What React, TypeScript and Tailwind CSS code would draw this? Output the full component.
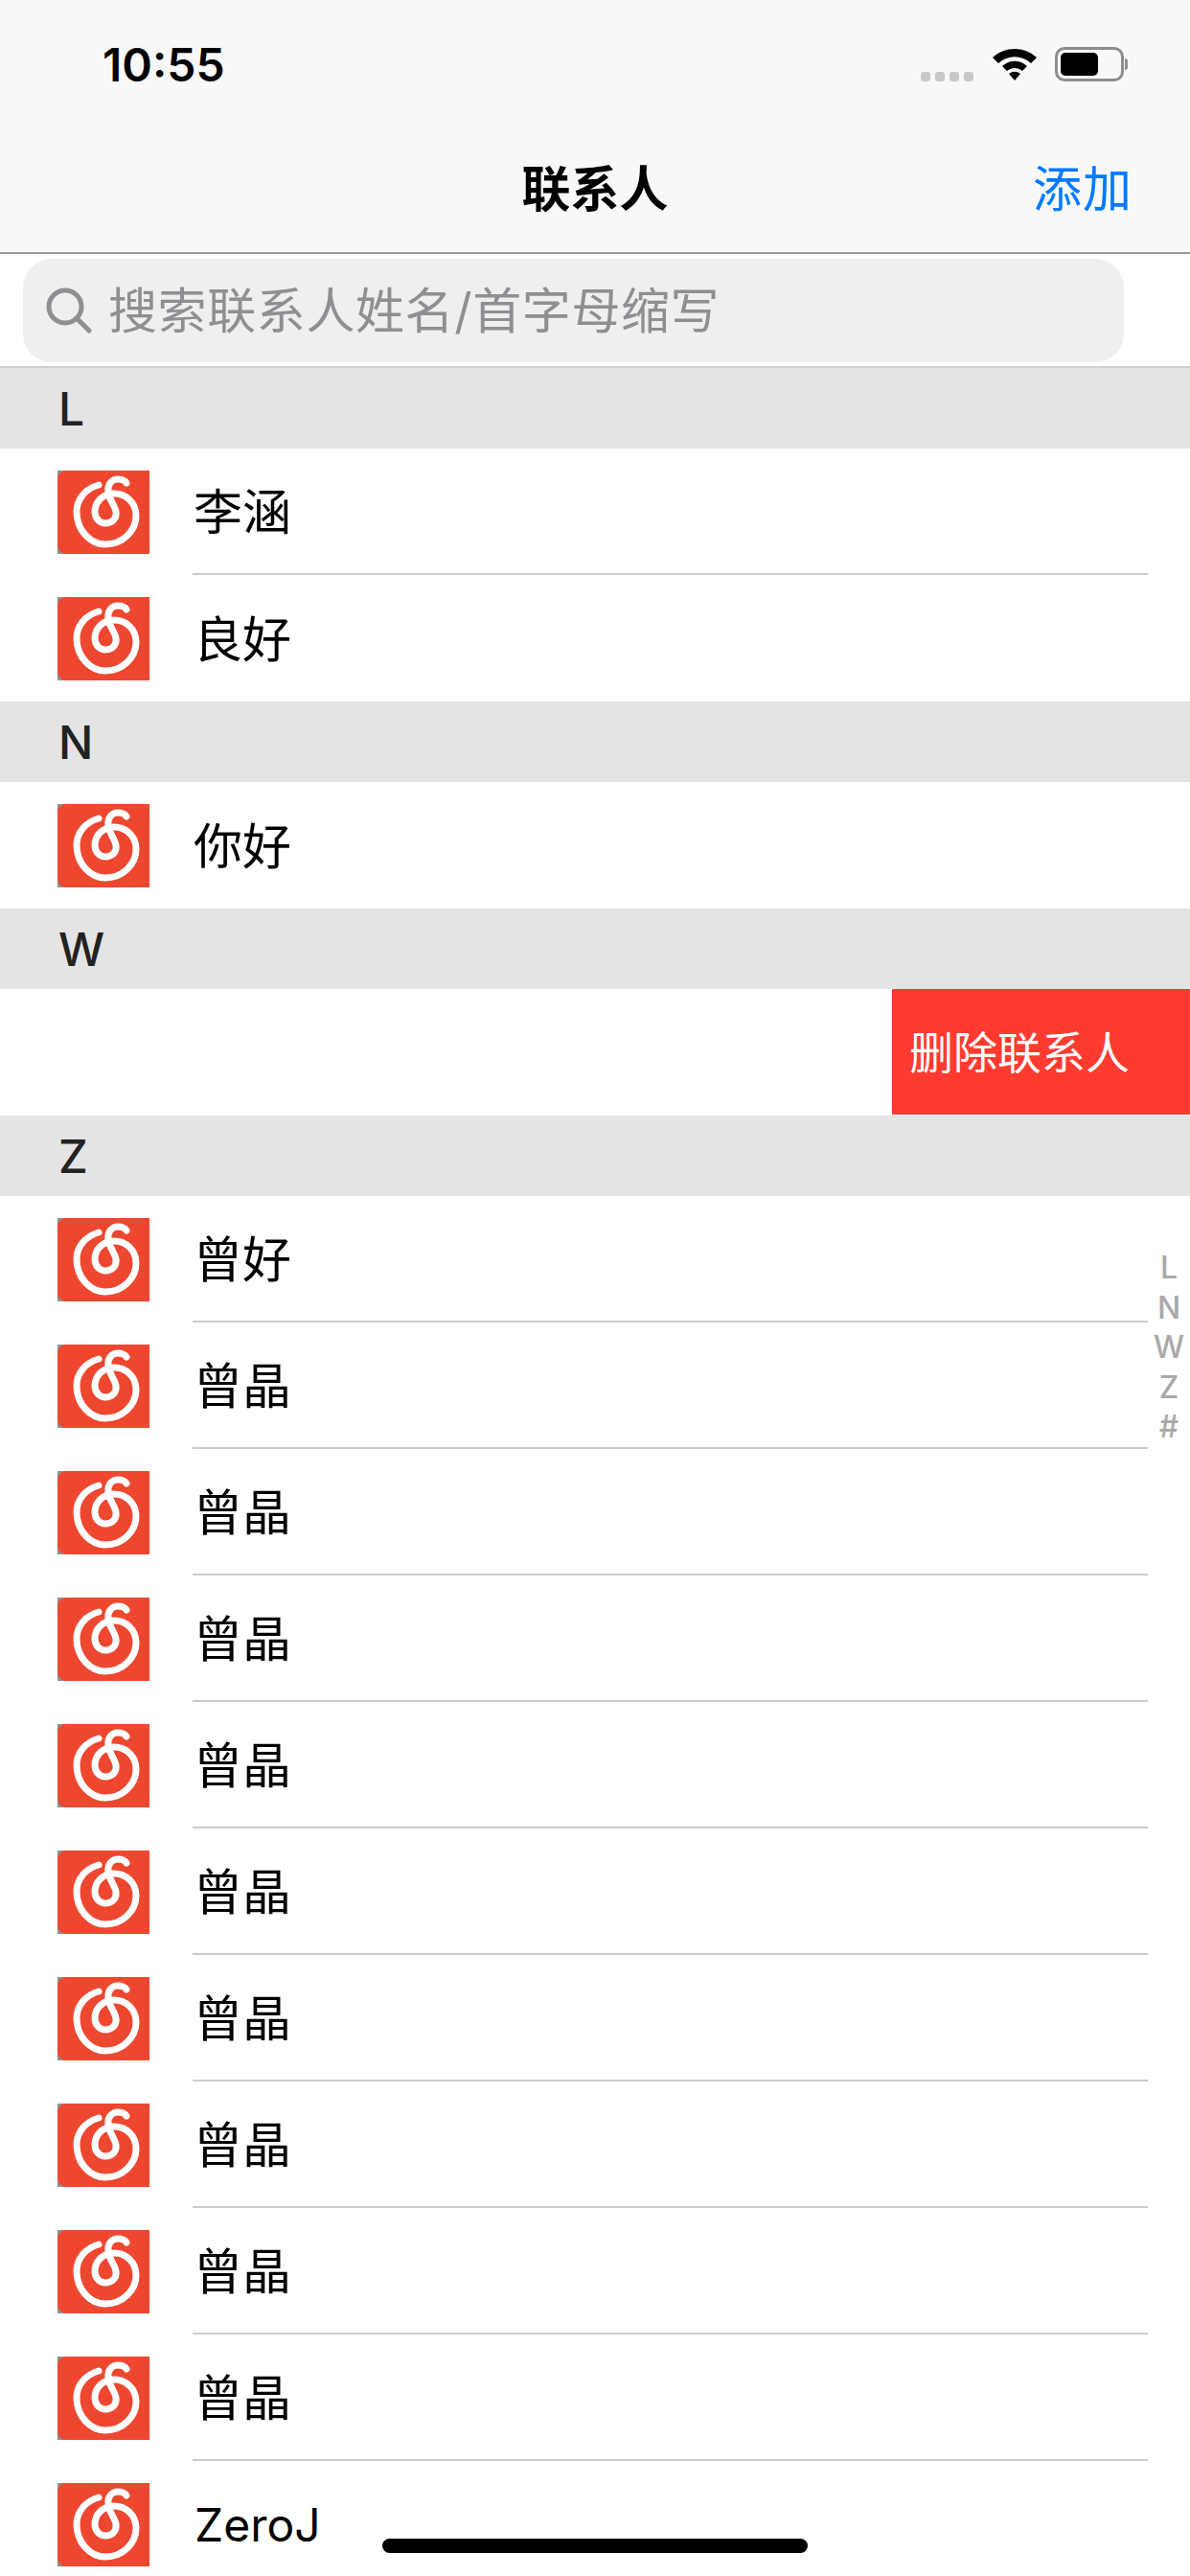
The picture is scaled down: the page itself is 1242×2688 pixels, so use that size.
const sans = "font-['Inter','Noto_Sans_CJK_SC',sans-serif]";

type Section = { letter: string; names: string[] };

const sections: Section[] = [
  { letter: "L", names: ["李涵", "良好"] },
  { letter: "N", names: ["你好"] },
  { letter: "W", names: [] },
  {
    letter: "Z",
    names: ["曾好", "曾晶", "曾晶", "曾晶", "曾晶", "曾晶", "曾晶", "曾晶", "曾晶", "曾晶", "ZeroJ"],
  },
];

function Logo() {
  return (
    <svg width="96" height="87" viewBox="0 0 96 87" className="shrink-0">
      <rect width="96" height="87" fill="#8f8f8f" />
      <rect width="96" height="87" rx="9" fill="#ee4730" />
      <rect x="14" width="82" height="87" fill="#ee4730" />
      <path
        className="blur-[0.5px]"
        d="M43 15C29 19 20 30 20 43C20 62 34 77 50 77C68 77 82 63 82 47C82 33 71 24 59 24C47 24 39 33 39 43C39 50 44 55 50 55C57 55 62 50 61 43C60 36 54 31 53 22C52 14 57 9 63 9C67 9 70 10 72 13"
        fill="none"
        stroke="#fff"
        strokeWidth="7"
        strokeLinecap="round"
      />
    </svg>
  );
}

function Row({ name, last }: { name: string; last: boolean }) {
  return (
    <div className="flex h-[132px] items-center pl-[60px]">
      <Logo />
      <div className={`ml-[45px] mr-[44px] flex h-full flex-1 items-center ${last ? "" : "border-b-2 border-[#cccccc]"}`}>
        <span className={`pt-[2px] leading-none text-black ${name === "ZeroJ" ? "pl-[2px] text-[48px]" : "pl-[1px] text-[51px]"}`}>
          {name}
        </span>
      </div>
    </div>
  );
}

function SectionHeader({ letter }: { letter: string }) {
  return (
    <div className="flex h-[84px] items-center bg-[#e4e4e4] pl-[61px] pt-[2px] text-[48px] font-medium text-[#222222]">
      {letter}
    </div>
  );
}

export default function App() {
  return (
    <div className={`relative h-[2688px] w-[1242px] overflow-hidden bg-white ${sans}`}>
      <header className="flex h-[265px] flex-col border-b-2 border-[#9a9a9a] bg-[#f8f8f8]">
        <div className="flex h-[132px] items-center justify-between pl-[107px] pr-[65px] pt-[2px]">
          <span className="pt-[2px] text-[48px] font-semibold leading-none text-black">10:55</span>
          <div className="flex items-center">
            <div className="mt-[26px] flex gap-[5px]">
              <span className="h-[10px] w-[10px] rounded-[3px] bg-[#c8c8c8]" />
              <span className="h-[10px] w-[10px] rounded-[3px] bg-[#c8c8c8]" />
              <span className="h-[10px] w-[10px] rounded-[3px] bg-[#c8c8c8]" />
              <span className="h-[10px] w-[10px] rounded-[3px] bg-[#c8c8c8]" />
            </div>
            <svg width="48" height="36" viewBox="0 0 48 36" className="ml-[19px]">
              <path d="M1 11C14 -1 34 -1 47 11L41 17C31 8 17 8 7 17Z" />
              <path d="M11 20C19 13 29 13 37 20L32 25C27 21 21 21 16 25Z" />
              <path d="M18 28C22 25 26 25 30 28L24 35Z" />
            </svg>
            <div className="ml-[18px] flex items-center">
              <div className="flex h-[36px] w-[72px] items-center rounded-[10px] border-[3px] border-[#8e8e8e] p-[3px]">
                <div className="h-full w-[39px] rounded-[5px] bg-black" />
              </div>
              <div className="ml-[1px] h-[12px] w-[3px] rounded-r-full bg-[#8e8e8e]" />
            </div>
          </div>
        </div>
        <div className="relative flex flex-1 items-center justify-center">
          <span className="text-[51px] font-semibold leading-none text-black">联系人</span>
          <span className="absolute right-[60px] text-[51px] leading-none tracking-[1px] text-[#007aff]">添加</span>
        </div>
      </header>

      <div className="flex h-[119px] items-start border-b-2 border-[#d0d0d0] pl-[24px] pr-[69px] pt-[5px]">
        <div className="flex h-[108px] w-full items-center rounded-[30px] bg-[#efefef] pl-[23px]">
          <svg width="50" height="50" viewBox="0 0 50 50" fill="none" stroke="#8e8e93" strokeWidth="5" strokeLinecap="round">
            <circle cx="21" cy="21" r="17" />
            <path d="M33 33L46 46" />
          </svg>
          <span className="ml-[16px] text-[51px] leading-none tracking-[0.6px] text-[#8e8e93]">搜索联系人姓名/首字母缩写</span>
        </div>
      </div>

      {sections.map((section) => (
        <div key={section.letter}>
          <SectionHeader letter={section.letter} />
          {section.names.map((name, i) => (
            <Row key={i} name={name} last={i === section.names.length - 1} />
          ))}
          {section.letter === "W" && (
            <div className="flex h-[132px] justify-end pb-[1px]">
              <div className="flex w-[311px] items-center bg-[#ff3b30] pl-[18px] text-[46px] leading-none text-white">
                删除联系人
              </div>
            </div>
          )}
        </div>
      ))}

      <div className="absolute right-0 top-[1302px] flex w-[44px] flex-col items-center text-[32px] font-medium leading-[41.5px] text-[#a9a9a9]">
        <span>L</span>
        <span>N</span>
        <span>W</span>
        <span>Z</span>
        <span>#</span>
      </div>

      <div className="absolute bottom-[24px] left-[399px] h-[15px] w-[444px] rounded-full bg-black" />
    </div>
  );
}
